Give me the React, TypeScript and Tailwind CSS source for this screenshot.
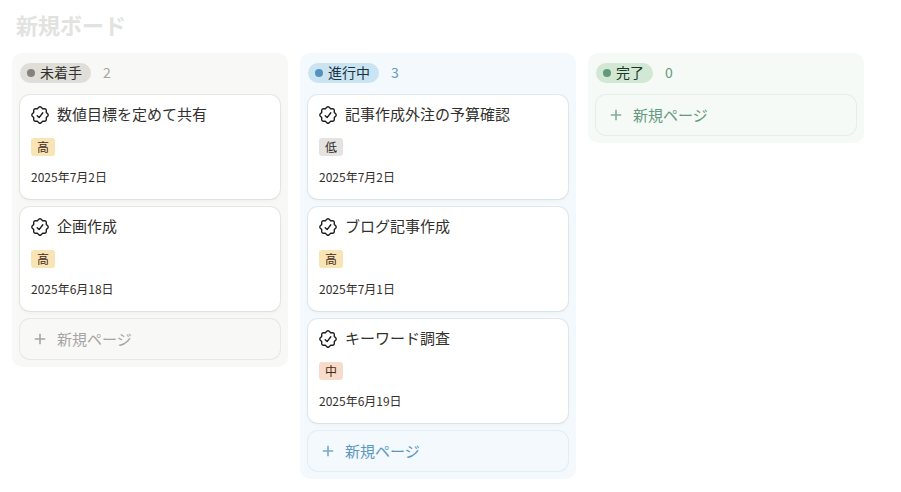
import React from "react";

type Task = { title: string; priority: "high" | "mid" | "low"; date: string };

type Column = {
  name: string;
  tasks: Task[];
  bg: string;
  pill: string;
  dot: string;
  count: string;
  card: string;
  button: string;
  plus: string;
};

const priorities = {
  high: { label: "高", className: "bg-[#f9e4b5] text-[#402c1b]" },
  mid: { label: "中", className: "bg-[#f8dccb] text-[#49290e]" },
  low: { label: "低", className: "bg-[#e4e3df] text-[#32302c]" },
};

const columns: Column[] = [
  {
    name: "未着手",
    tasks: [
      { title: "数値目標を定めて共有", priority: "high", date: "2025年7月2日" },
      { title: "企画作成", priority: "high", date: "2025年6月18日" },
    ],
    bg: "bg-[#f8f8f6]",
    pill: "bg-[#dfded9] text-[#32302c]",
    dot: "bg-[#84827d]",
    count: "text-[#a6a5a2]",
    card: "shadow-[0_2px_4px_rgba(0,0,0,0.04),0_0_0_1px_#e8e8e4]",
    button: "text-[#a6a5a2] shadow-[0_0_0_1px_#e8e8e4]",
    plus: "text-[#a6a5a2]",
  },
  {
    name: "進行中",
    tasks: [
      { title: "記事作成外注の予算確認", priority: "low", date: "2025年7月2日" },
      { title: "ブログ記事作成", priority: "high", date: "2025年7月1日" },
      { title: "キーワード調査", priority: "mid", date: "2025年6月19日" },
    ],
    bg: "bg-[#f3f9fd]",
    pill: "bg-[#cae4f1] text-[#183347]",
    dot: "bg-[#5292bd]",
    count: "text-[#6299c0]",
    card: "shadow-[0_2px_4px_rgba(0,0,0,0.04),0_0_0_1px_#e2eaed]",
    button: "text-[#5b97bd] shadow-[0_0_0_1px_#e1eef3]",
    plus: "text-[#76aac8]",
  },
  {
    name: "完了",
    tasks: [],
    bg: "bg-[#f5faf7]",
    pill: "bg-[#d3e8d4] text-[#1c3829]",
    dot: "bg-[#5f9b79]",
    count: "text-[#64997b]",
    card: "",
    button: "text-[#64997b] shadow-[0_0_0_1px_#e5efe8]",
    plus: "text-[#83ae94]",
  },
];

function BadgeIcon() {
  return (
    <svg
      viewBox="-10 -10 20 20"
      className="size-5 shrink-0 text-[#201f1d]"
      fill="none"
      stroke="currentColor"
      strokeWidth="1.4"
      strokeLinecap="round"
      strokeLinejoin="round"
      aria-hidden="true"
    >
      <path d="M6.3-2.6L7.9-.9Q8.6 0 7.9.9L6.3 2.6L6.3 4.9Q6.1 6.1 4.9 6.3L2.6 6.3L.9 7.9Q0 8.6-.9 7.9L-2.6 6.3L-4.9 6.3Q-6.1 6.1-6.3 4.9L-6.3 2.6L-7.9.9Q-8.6 0-7.9-.9L-6.3-2.6L-6.3-4.9Q-6.1-6.1-4.9-6.3L-2.6-6.3L-.9-7.9Q0-8.6.9-7.9L2.6-6.3L4.9-6.3Q6.1-6.1 6.3-4.9Z" />
      <path d="M-2.8.7L-.9 2.6L2.8-2.2" />
    </svg>
  );
}

function PlusIcon({ className }: { className: string }) {
  return (
    <svg viewBox="0 0 20 20" className={`size-5 shrink-0 ${className}`} fill="none" stroke="currentColor" strokeWidth="1.6" aria-hidden="true">
      <path d="M10 4.8v10.4M4.8 10h10.4" />
    </svg>
  );
}

function TaskCard({ task, className }: { task: Task; className: string }) {
  const priority = priorities[task.priority];
  return (
    <li className={`rounded-[10px] bg-white px-[10px] pt-[10px] pb-3 text-[#32302c] ${className}`}>
      <div className="flex items-center gap-[7px]">
        <BadgeIcon />
        <h3 className="pb-[2px] text-[15px] leading-[18px]">{task.title}</h3>
      </div>
      <div className="mt-[13px] flex px-px">
        <span className={`rounded-[3px] px-1.5 text-[12px] leading-[18px] ${priority.className}`}>{priority.label}</span>
      </div>
      <p className="mt-[11px] px-px text-[12px] leading-5">{task.date}</p>
    </li>
  );
}

function BoardColumn({ column }: { column: Column }) {
  return (
    <section className={`w-[276px] shrink-0 rounded-[10px] px-2 pb-2 ${column.bg}`}>
      <header className="flex h-[42px] items-center gap-3 pb-[2px] text-[14px] leading-[18px]">
        <div className={`flex items-center gap-[5px] rounded-full pr-[9px] pl-[7px] ${column.pill}`}>
          <span className={`size-2 rounded-full ${column.dot}`} />
          <h2 className="pb-[2px]">{column.name}</h2>
        </div>
        <span className={`pb-[2px] ${column.count}`}>{column.tasks.length}</span>
      </header>
      <ul className="flex flex-col gap-2">
        {column.tasks.map((task) => (
          <TaskCard key={task.title} task={task} className={column.card} />
        ))}
        <li>
          <button type="button" className={`flex h-10 w-full items-center gap-[7px] rounded-[10px] px-[10px] text-[15px] leading-5 ${column.button}`}>
            <PlusIcon className={column.plus} />
            新規ページ
          </button>
        </li>
      </ul>
    </section>
  );
}

export default function App() {
  return (
    <main className="min-h-screen bg-white px-3 pt-2 pb-3 font-['Noto_Sans_CJK_JP',sans-serif]">
      <h1 className="px-1 text-[22px] leading-8 font-bold text-[#e2e2e0]">新規ボード</h1>
      <div className="mt-[13px] flex items-start gap-3">
        {columns.map((column) => (
          <BoardColumn key={column.name} column={column} />
        ))}
      </div>
    </main>
  );
}
